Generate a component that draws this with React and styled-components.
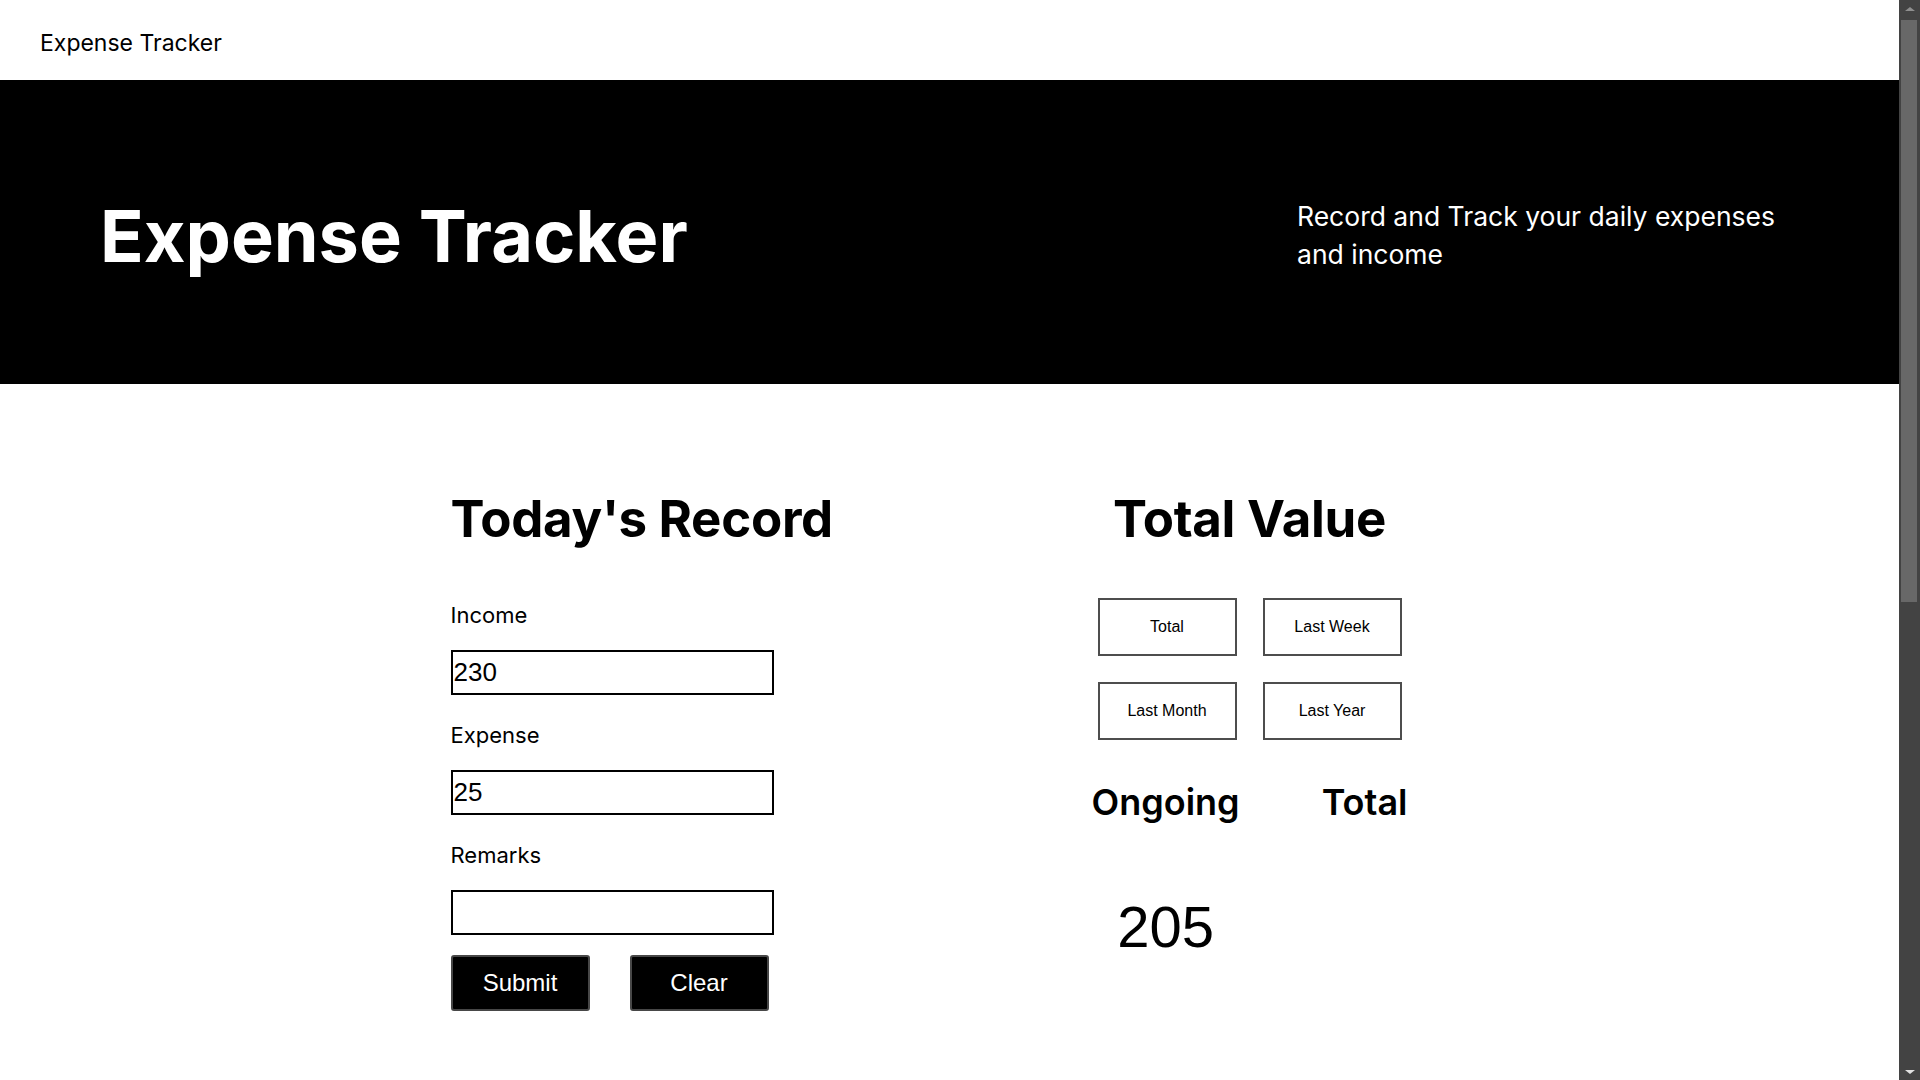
import React from 'react';
import styled, { createGlobalStyle } from 'styled-components';

const GlobalStyle = createGlobalStyle`
	body {
		margin: 0;
		background: #fff;
		color: #000;
		font-family: Inter, "Noto Sans", sans-serif;
		overflow: hidden;
	}
`;

const Page = styled.div`
	display: flex;
	align-items: flex-start;
`;

const Content = styled.div`
	flex: 1;
	min-width: 0;
`;

// the browser's scroll bar as it shows in the screenshot
const ScrollRail = styled.div`
	position: sticky;
	top: 0;
	flex-shrink: 0;
	width: 21px;
	height: 100vh;
	background: #434343;
	display: flex;
	flex-direction: column;
	align-items: center;
`;

const RailArrow = styled.div`
	height: 17px;
	width: 100%;
	display: flex;
	align-items: center;
	justify-content: center;
	&::before {
		content: '';
		border-left: 5px solid transparent;
		border-right: 5px solid transparent;
		${p => (p.down
			? 'border-top: 4px solid #e0e0e0;'
			: 'border-bottom: 4px solid #8f8f8f;')}
	}
`;

const RailTrack = styled.div`
	flex: 1;
	width: 100%;
	box-sizing: border-box;
	padding: 3px 3px 0 2px;
`;

const RailThumb = styled.div`
	height: 582px;
	background: #686868;
`;

const Nav = styled.nav`
	height: 80px;
	box-sizing: border-box;
	display: flex;
	align-items: center;
	padding: 5px 40px 0;
	font-size: 23px;
`;

const Banner = styled.header`
	height: 304px;
	box-sizing: border-box;
	background: #000;
	color: #fff;
	display: flex;
	align-items: center;
	justify-content: space-between;
	padding: 6px 102px 0 100px;
`;

const BannerTitle = styled.h1`
	margin: 0;
	font-size: 72px;
	font-weight: 700;
`;

const BannerText = styled.p`
	margin: 0;
	width: 500px;
	font-size: 26.5px;
	line-height: 38px;
`;

const Main = styled.main`
	width: 998px;
	margin: 0 auto;
	padding-top: 104px;
	display: grid;
	grid-template-columns: 400px 398px;
	justify-content: space-between;
`;

const Column = styled.section`
	display: flex;
	flex-direction: column;
	align-items: ${p => (p.centered ? 'center' : 'flex-start')};
`;

const Heading = styled.h2`
	margin: 0 0 ${p => p.gap}px;
	font-size: 51px;
	font-weight: 700;
	letter-spacing: -0.3px;
`;

const Fields = styled.div`
	display: flex;
	flex-direction: column;
	gap: 27px;
`;

const Label = styled.label`
	display: block;
	font-size: 22px;
	margin-bottom: 22px;
`;

const Input = styled.input`
	display: block;
	width: 323px;
	height: 45px;
	box-sizing: border-box;
	border: 2px solid #000;
	padding: 0 1px;
	margin: 0;
	background: #fff;
	color: #000;
	font-family: "Liberation Sans", Arial, sans-serif;
	font-size: 26px;
	outline: none;
`;

const Actions = styled.div`
	display: flex;
	gap: 40px;
	margin-top: 20px;
`;

const DarkButton = styled.button`
	width: 139px;
	height: 56px;
	background: #000;
	color: #fff;
	border: 2px solid #474747;
	border-radius: 3px;
	font-family: "Liberation Sans", Arial, sans-serif;
	font-size: 24px;
	padding: 0;
`;

const RangeGrid = styled.div`
	display: grid;
	grid-template-columns: 139px 139px;
	grid-auto-rows: 58px;
	gap: 26px;
`;

const RangeButton = styled.button`
	background: #fff;
	color: #000;
	border: 2px solid #4d4d4d;
	font-family: "Liberation Sans", Arial, sans-serif;
	font-size: 16px;
	padding: 0;
`;

const Stats = styled.div`
	display: flex;
	gap: 82px;
	margin-top: 40px;
`;

const Stat = styled.div`
	display: flex;
	flex-direction: column;
	align-items: center;
`;

const StatLabel = styled.h3`
	margin: 0;
	font-size: 36px;
	font-weight: 600;
`;

const StatValue = styled.div`
	margin-top: 69px;
	font-family: "Liberation Sans", Arial, sans-serif;
	font-size: 58px;
	min-height: 66px;
`;

const ranges = ['Total', 'Last Week', 'Last Month', 'Last Year'];

const App = () => (
	<Page>
		<GlobalStyle />
		<Content>
			<Nav>Expense Tracker</Nav>
			<Banner>
				<BannerTitle>Expense Tracker</BannerTitle>
				<BannerText>Record and Track your daily expenses and income</BannerText>
			</Banner>
			<Main>
				<Column>
					<Heading gap={53}>Today's Record</Heading>
					<Fields>
						<div>
							<Label htmlFor="income">Income</Label>
							<Input id="income" defaultValue="230" />
						</div>
						<div>
							<Label htmlFor="expense">Expense</Label>
							<Input id="expense" defaultValue="25" />
						</div>
						<div>
							<Label htmlFor="remarks">Remarks</Label>
							<Input id="remarks" defaultValue="" />
						</div>
					</Fields>
					<Actions>
						<DarkButton>Submit</DarkButton>
						<DarkButton>Clear</DarkButton>
					</Actions>
				</Column>
				<Column centered>
					<Heading gap={49}>Total Value</Heading>
					<RangeGrid>
						{ranges.map(r => (
							<RangeButton key={r}>{r}</RangeButton>
						))}
					</RangeGrid>
					<Stats>
						<Stat>
							<StatLabel>Ongoing</StatLabel>
							<StatValue>205</StatValue>
						</Stat>
						<Stat>
							<StatLabel>Total</StatLabel>
							<StatValue></StatValue>
						</Stat>
					</Stats>
				</Column>
			</Main>
		</Content>
		<ScrollRail>
			<RailArrow />
			<RailTrack>
				<RailThumb />
			</RailTrack>
			<RailArrow down />
		</ScrollRail>
	</Page>
);

export default App;
